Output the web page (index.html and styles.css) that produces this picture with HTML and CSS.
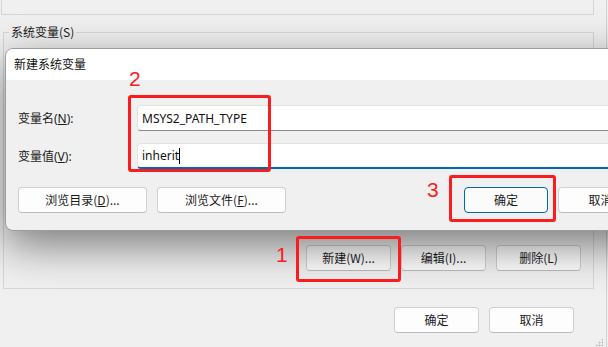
FILE: index.html
```html
<!DOCTYPE html>
<html lang="zh-CN">
<head>
<meta charset="utf-8">
<title>新建系统变量</title>
<link rel="stylesheet" href="styles.css">
</head>
<body>
<div class="window">
  <div class="top-group"></div>
  <fieldset class="sys-group">
    <legend>系统变量(S)</legend>
    <div class="list-area"></div>
    <div class="btn-row">
      <button class="btn">新建(W)...</button>
      <button class="btn">编辑(I)...</button>
      <button class="btn">删除(L)</button>
    </div>
  </fieldset>
  <div class="footer">
    <button class="btn">确定</button>
    <button class="btn">取消</button>
  </div>
  <div class="grip"></div>

  <div class="dialog">
    <div class="dlg-title">新建系统变量</div>
    <div class="dlg-body">
      <div class="field">
        <label class="lbl">变量名(<u>N</u>):</label>
        <div class="input">MSYS2_PATH_TYPE</div>
      </div>
      <div class="field">
        <label class="lbl">变量值(<u>V</u>):</label>
        <div class="input focused">inherit<span class="caret"></span></div>
      </div>
      <div class="dlg-buttons">
        <button class="btn wide">浏览目录(<u>D</u>)...</button>
        <button class="btn wide">浏览文件(<u>F</u>)...</button>
        <button class="btn default">确定</button>
        <button class="btn">取消</button>
      </div>
    </div>
  </div>

  <div class="mark box2"></div>
  <div class="num n2">2</div>
  <div class="mark box3"></div>
  <div class="num n3">3</div>
  <div class="mark box1"></div>
  <div class="num n1">1</div>
</div>
</body>
</html>
```

FILE: styles.css
```css
* { box-sizing: border-box; }
html, body {
  margin: 0;
  padding: 0;
  background: #f0f0f0;
  width: 608px;
  height: 347px;
  overflow: hidden;
  font-family: "Noto Sans", "Noto Sans CJK SC", sans-serif;
  font-size: 12px;
  color: #1a1a1a;
}
.window {
  position: relative;
  width: 607px;
  height: 347px;
  border-right: 1px solid #d2d2d2;
  display: flex;
  flex-direction: column;
}
.top-group {
  margin-left: 1px;
  width: 593px;
  height: 15px;
  border: 1px solid #d6d6d6;
  border-top: none;
  flex: none;
}
.sys-group {
  margin: 9px 0 0 3px;
  width: 591px;
  padding: 0 12px 17px 0;
  border: 1px solid #d6d6d6;
  min-width: 0;
  flex: none;
}
.sys-group legend {
  margin-left: 5px;
  padding: 0 2px;
  line-height: 16px;
  font-family: "Noto Sans CJK SC", sans-serif;
}
.list-area { height: 205px; }
.btn-row {
  display: flex;
  justify-content: flex-end;
  gap: 10px;
}
.btn {
  font: inherit;
  font-family: "Noto Sans CJK SC", sans-serif;
  font-size: 12px;
  color: #1a1a1a;
  width: 85px;
  height: 26px;
  padding: 0;
  background: #fdfdfd;
  border: 1px solid #d0d0d0;
  border-bottom-color: #bcbcbc;
  border-radius: 4px;
  line-height: 22px;
}
.footer {
  display: flex;
  justify-content: flex-end;
  gap: 10px;
  margin-top: 18px;
  padding-right: 32px;
}
.grip {
  position: absolute;
  right: 3px;
  bottom: 1px;
  width: 8px;
  height: 8px;
  background:
    radial-gradient(circle, #bdbdbd 45%, transparent 50%) 0 0 / 3px 3px;
  clip-path: polygon(100% 0, 100% 100%, 0 100%);
}

.dialog {
  position: absolute;
  left: 5px;
  top: 48px;
  width: 650px;
  height: 183px;
  background: #f0f0f0;
  border: 1px solid #9c9c9c;
  border-radius: 8px;
  overflow: hidden;
  box-shadow: 0 14px 44px rgba(0, 0, 0, 0.5);
}
.dlg-title {
  height: 31px;
  background: #ffffff;
  padding-left: 8px;
  line-height: 30px;
  font-family: "Noto Sans CJK SC", sans-serif;
  color: #111;
}
.dlg-body {
  padding: 25px 0 0 12px;
}
.field {
  display: flex;
  align-items: center;
  margin-bottom: 12px;
}
.lbl {
  width: 119px;
  font-family: "Noto Sans", "Noto Sans CJK SC", sans-serif;
}
.input {
  flex: 1;
  height: 26px;
  background: #ffffff;
  border: 1px solid #e3e3e3;
  border-bottom: 1px solid #8a8a8a;
  border-radius: 4px 0 0 4px;
  padding-left: 4px;
  line-height: 23px;
  font-family: "Noto Sans", sans-serif;
  color: #111;
  display: flex;
  align-items: center;
}
.input.focused {
  border-bottom: 2px solid #0067c0;
}
.caret {
  display: inline-block;
  width: 1px;
  height: 16px;
  background: #000;
  margin-left: 0;
}
.dlg-buttons {
  display: flex;
  gap: 10px;
  margin-top: 18px;
}
.btn.wide { width: 129px; }
.btn.default {
  margin-left: 168px;
  width: 84px;
  border: 1px solid #0067c0;
  background: #fbfbfb;
}

.mark {
  position: absolute;
  border: 3px solid #fb1d1d;
  border-radius: 3px;
}
.box2 { left: 128px; top: 95px; width: 143px; height: 77px; }
.box3 { left: 449px; top: 175px; width: 107px; height: 47px; }
.box1 { left: 296px; top: 236px; width: 105px; height: 46px; }
.num {
  position: absolute;
  font-family: "Liberation Sans", sans-serif;
  font-size: 21px;
  line-height: 21px;
  color: #fb1d1d;
}
.n2 { left: 129px; top: 68px; }
.n3 { left: 427px; top: 179px; }
.n1 { left: 276px; top: 244px; }
```
